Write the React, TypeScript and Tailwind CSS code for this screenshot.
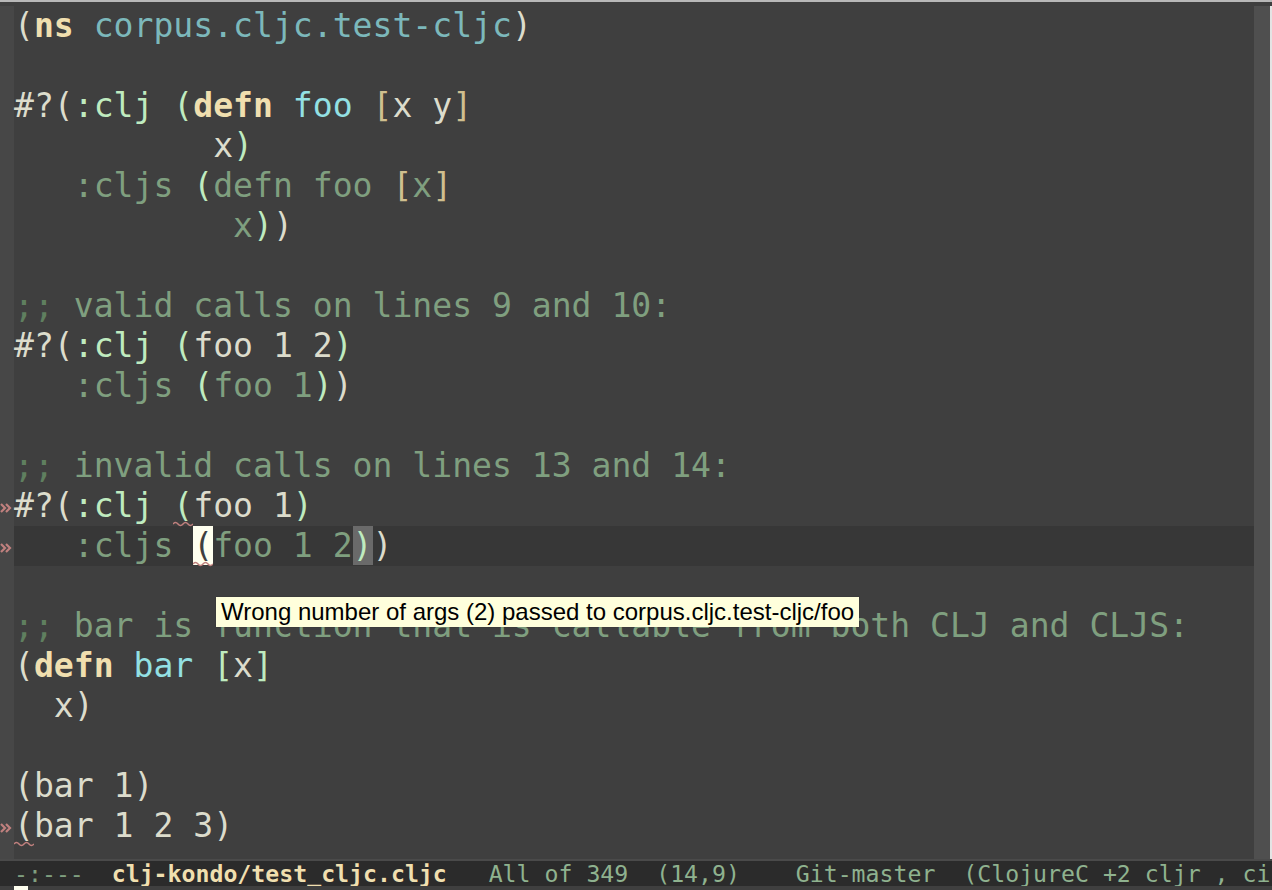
type Seg = [string, string?, boolean?];

const FG = "text-[#dcdccc]";
const KW = "text-[#f0dfaf] font-bold";
const FN = "text-[#93e0e3]";
const NS = "text-[#7cb8bb]";
const MINT = "text-[#bfebbf]";
const BRK = "text-[#d0bf8f]";
const DIM = "text-[#7f9f7f]";
const CMT = "text-[#7f9f7f]";
const CMTD = "text-[#5f7f5f]";

const comment = (t: string): Seg[] => [[";; ", CMTD], [t, CMT]];

// third element marks a flycheck error squiggle
const lines: Seg[][] = [
  [["(", FG], ["ns", KW], [" "], ["corpus.cljc.test-cljc", NS], [")", FG]],
  [],
  [["#?(", FG], [":clj", MINT], [" "], ["(", MINT], ["defn", KW], [" "], ["foo", FN], [" "], ["[", BRK], ["x y", FG], ["]", BRK]],
  [["          "], ["x", FG], [")", MINT]],
  [["   "], [":cljs", DIM], [" "], ["(", MINT], ["defn foo ", DIM], ["[", BRK], ["x", DIM], ["]", BRK]],
  [["           "], ["x", DIM], [")", MINT], [")", FG]],
  [],
  comment("valid calls on lines 9 and 10:"),
  [["#?(", FG], [":clj", MINT], [" "], ["(", MINT], ["foo 1 2", FG], [")", MINT]],
  [["   "], [":cljs", DIM], [" "], ["(", MINT], ["foo 1", DIM], [")", MINT], [")", FG]],
  [],
  comment("invalid calls on lines 13 and 14:"),
  [["#?(", FG], [":clj", MINT], [" "], ["(", MINT, true], ["foo 1", FG], [")", MINT]],
  [
    ["   "],
    [":cljs", DIM],
    [" "],
    ["(", "bg-[#ffffef] text-[#3f3f3f]", true],
    ["foo 1 2", DIM],
    [")", "bg-[#6a6a6a] text-[#bfebbf]"],
    [")", FG],
  ],
  [],
  comment("bar is function that is callable from both CLJ and CLJS:"),
  [["(", FG], ["defn", KW], [" "], ["bar", FN], [" "], ["[", MINT], ["x", FG], ["]", MINT]],
  [["  x)", FG]],
  [],
  [["(bar 1)", FG]],
  [["(", FG, true], ["bar 1 2 3)", FG]],
];

const errorRows = new Set([12, 13, 20]);
const cursorRow = 13;

function FringeArrow() {
  return (
    <svg width="13" height="14" viewBox="0 0 13 14" className="mt-[4px]">
      <path d="M1 3 L5 7 L1 11 M6 3 L10 7 L6 11" fill="none" stroke="#c0807e" strokeWidth="2.2" />
    </svg>
  );
}

function Squiggle() {
  return (
    <svg
      width="20"
      height="6"
      viewBox="0 0 20 6"
      className="pointer-events-none absolute bottom-[-2px] left-0"
    >
      <path d="M0 3 Q2.5 0 5 3 T10 3 T15 3 T20 3" fill="none" stroke="#c0807e" strokeWidth="1.5" />
    </svg>
  );
}

export default function App() {
  return (
    <div className="relative flex h-[890px] w-[1272px] flex-col overflow-hidden bg-[#3f3f3f] font-['DejaVu_Sans_Mono',monospace]">
      <div className="h-[2px] bg-[#b8b8b8]" />
      <div className="h-[4px]" />

      {/* window body */}
      <div className="flex h-[853px]">
        <div className="flex w-[14px] flex-col bg-[#474747]">
          {lines.map((_, i) => (
            <div key={i} className="flex h-[40px] items-center justify-start">
              {errorRows.has(i) && <FringeArrow />}
            </div>
          ))}
        </div>

        <div className="flex-1 text-[33.1px]">
          {lines.map((segs, i) => (
            <div
              key={i}
              className={`h-[40px] whitespace-pre leading-[40px] ${i === cursorRow ? "bg-[#373737]" : ""}`}
            >
              {segs.map(([t, c, err], j) => (
                <span key={j} className={`${c ?? FG} ${err ? "relative" : ""}`}>
                  {t}
                  {err && <Squiggle />}
                </span>
              ))}
            </div>
          ))}
        </div>

        <div className="w-[16px] bg-[#4f4f4f]" />
        <div className="w-[2px] bg-[#e4e4e4]" />
      </div>

      {/* mode line */}
      <div className="h-[2px] bg-[#4a4a4a]" />
      <div className="h-[25px] overflow-hidden whitespace-pre bg-[#2b2b2b] pl-[14px] text-[23.2px] leading-[25px] text-[#8fb28f]">
        <span className="text-[#7f9f7f]">-:---</span>
        <span>  </span>
        <span className="font-bold text-[#f0dfaf]">clj-kondo/test_cljc.cljc</span>
        <span>   All of 349  (14,9)    Git-master  (ClojureC +2 cljr , ci</span>
      </div>

      {/* minibuffer */}
      <div className="flex h-[4px] bg-[#3f3f3f] pl-[14px]">
        <div className="w-[14px] bg-[#fffff0]" />
      </div>

      {/* flycheck tooltip */}
      <div className="absolute left-[216px] top-[597px] h-[30px] whitespace-pre bg-[#ffffdc] px-[5px] font-['Liberation_Sans',Arial,sans-serif] text-[24px] leading-[30px] text-black shadow-[0_0_1px_rgba(0,0,0,0.3)]">
        Wrong number of args (2) passed to corpus.cljc.test-cljc/foo
      </div>
    </div>
  );
}
